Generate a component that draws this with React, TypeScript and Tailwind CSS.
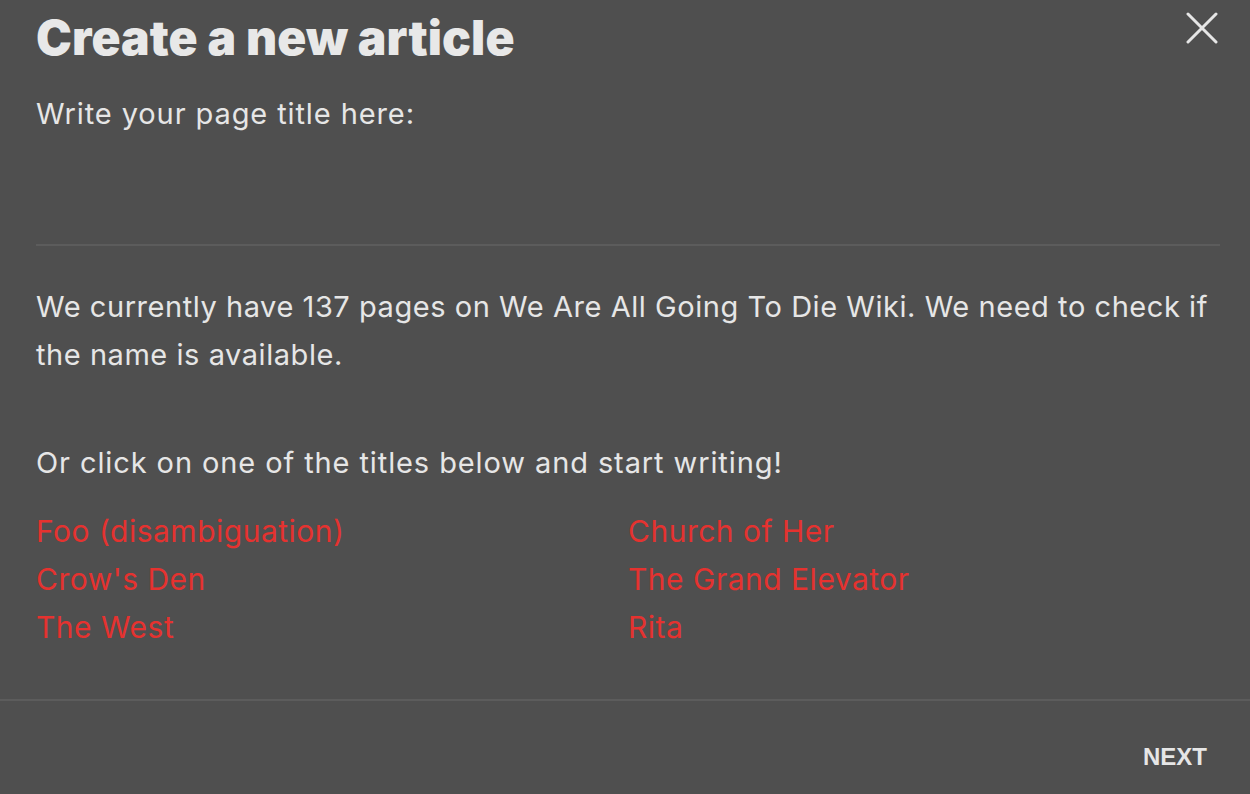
import React from "react";

const links: [string, string][] = [
  ["Foo (disambiguation)", "Church of Her"],
  ["Crow's Den", "The Grand Elevator"],
  ["The West", "Rita"],
];

export default function App() {
  return (
    <div
      className="w-[1250px] h-[794px] bg-[#4f4f4f] text-[#e6e6e6] flex flex-col overflow-hidden"
      style={{ fontFamily: "Inter, 'Noto Sans', sans-serif" }}
    >
      <div className="flex-1 flex flex-col pl-[36px] pr-[30px] relative">
        <button className="absolute right-[32px] top-[12px] w-[32px] h-[32px] flex items-center justify-center">
          <svg width="32" height="32" viewBox="0 0 32 32" fill="none">
            <path d="M2 2L30 30M30 2L2 30" stroke="#e6e6e6" strokeWidth="3" strokeLinecap="round" />
          </svg>
        </button>
        <h1 className="text-[48px] leading-[48px] font-black tracking-[0.1px] mt-[14px] text-[#e8e8e8]">
          Create a new article
        </h1>
        <p className="text-[29px] leading-[48px] tracking-[0.9px] mt-[28px]">Write your page title here:</p>
        <div className="h-[108px] border-b-2 border-[#5c5c5c]" />
        <p className="text-[29px] leading-[48px] tracking-[0.55px] mt-[37px]">
          We currently have 137 pages on We Are All Going To Die Wiki. We need to check if the name is available.
        </p>
        <p className="text-[29px] leading-[48px] tracking-[0.9px] mt-[60px]">
          Or click on one of the titles below and start writing!
        </p>
        <div className="grid grid-cols-2 mt-[20px] text-[30px] leading-[48px] tracking-[0.5px] text-[#e5322f] w-[1184px]">
          {links.map(([a, b]) => (
            <React.Fragment key={a}>
              <span>{a}</span>
              <span>{b}</span>
            </React.Fragment>
          ))}
        </div>
      </div>
      <div className="border-t-2 border-[#5c5c5c] h-[95px] flex items-center justify-end pr-[43px] pt-[18px]">
        <span
          className="text-[24px] font-bold text-[#e6e6e6]"
          style={{ fontFamily: "'Liberation Sans', Arial, sans-serif" }}
        >
          NEXT
        </span>
      </div>
    </div>
  );
}
